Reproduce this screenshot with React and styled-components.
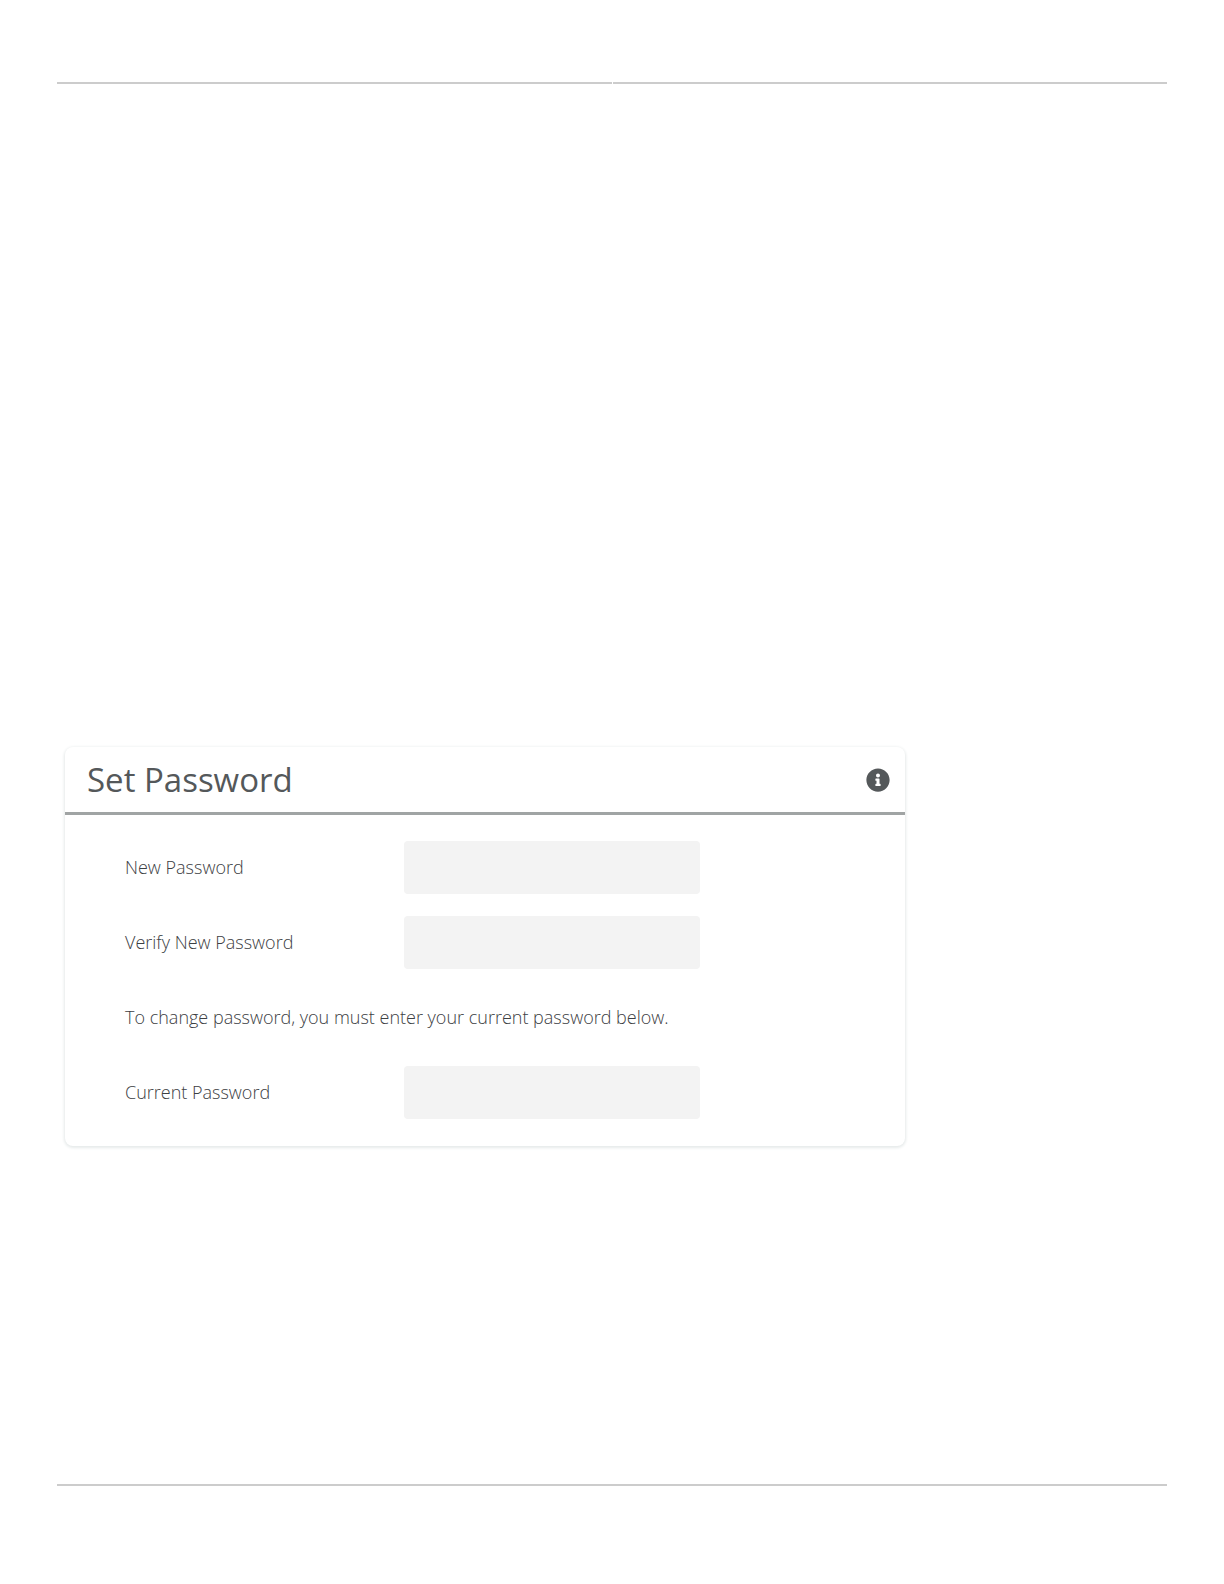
import React from 'react';
import styled, { createGlobalStyle } from 'styled-components';
import { FaInfoCircle } from 'react-icons/fa';

const GlobalStyle = createGlobalStyle`
  *{
    box-sizing: border-box;
  }

  body{
    margin: 0;
    background: #fff;
    color: #54585a;
    font-family: "Open Sans", "Noto Sans", sans-serif;
  }
`

const Page = styled.div`
  display: flex;
  flex-direction: column;
  min-height: 100vh;
  padding: 82px 57px 98px;
`

// the rule on top is split in two, one half for each header cell
const PageHeader = styled.header`
  display: grid;
  grid-template-columns: 1fr 1fr;
  gap: 1px;
`

const Rule = styled.div`
  height: 2px;
  background: #ccc;
`

const Content = styled.main`
  flex: 1;
  padding: 663px 8px 40px;
`

const Card = styled.form`
  width: 100%;
  max-width: 840px;
  border-radius: 8px;
  background: #fff;
  box-shadow: 0 1px 3px 1px #e6eaea;
`

const CardHeader = styled.div`
  display: flex;
  align-items: center;
  justify-content: space-between;
  height: 68px;
  padding: 0 15px 0 22px;
  border-bottom: 3px solid #a0a4a4;
`

const Title = styled.h1`
  margin: 0;
  font-size: 33px;
  font-weight: 400;
  line-height: 48px;
`

const InfoButton = styled.button`
  display: flex;
  padding: 0;
  border: 0;
  background: transparent;
  color: #54585a;
  font-size: 24px;
  cursor: pointer;
`

const Fields = styled.div`
  display: grid;
  gap: 22px;
  padding: 26px 60px 27px;
`

const Row = styled.div`
  display: flex;
  align-items: center;
  min-height: 53px;
  color: #3c4043;
  font-size: 18px;
  font-weight: 300;
  line-height: 26px;

  label, p{
    padding-bottom: 2px;
  }
`

const Label = styled.label`
  flex: 0 0 279px;
`

const Note = styled.p`
  margin: 0;
`

const Input = styled.input`
  flex: 0 1 296px;
  min-width: 0;
  height: 53px;
  padding: 0 16px;
  border: 0;
  border-radius: 4px;
  background: #f3f3f3;
  color: inherit;
  font: inherit;
`

const Field = ({ id, label, autoComplete }) => (
  <Row>
    <Label htmlFor={id}>{label}</Label>
    <Input id={id} name={id} type="password" autoComplete={autoComplete} />
  </Row>
)

const App = () => (
  <Page>
    <GlobalStyle />
    <PageHeader>
      <Rule />
      <Rule />
    </PageHeader>
    <Content>
      <Card onSubmit={(e) => e.preventDefault()}>
        <CardHeader>
          <Title>Set Password</Title>
          <InfoButton type="button" aria-label="Info"><FaInfoCircle /></InfoButton>
        </CardHeader>
        <Fields>
          <Field id="newPassword" label="New Password" autoComplete="new-password" />
          <Field id="verifyPassword" label="Verify New Password" autoComplete="new-password" />
          <Row>
            <Note>To change password, you must enter your current password below.</Note>
          </Row>
          <Field id="currentPassword" label="Current Password" autoComplete="current-password" />
        </Fields>
      </Card>
    </Content>
    <footer>
      <Rule />
    </footer>
  </Page>
)

export default App;
